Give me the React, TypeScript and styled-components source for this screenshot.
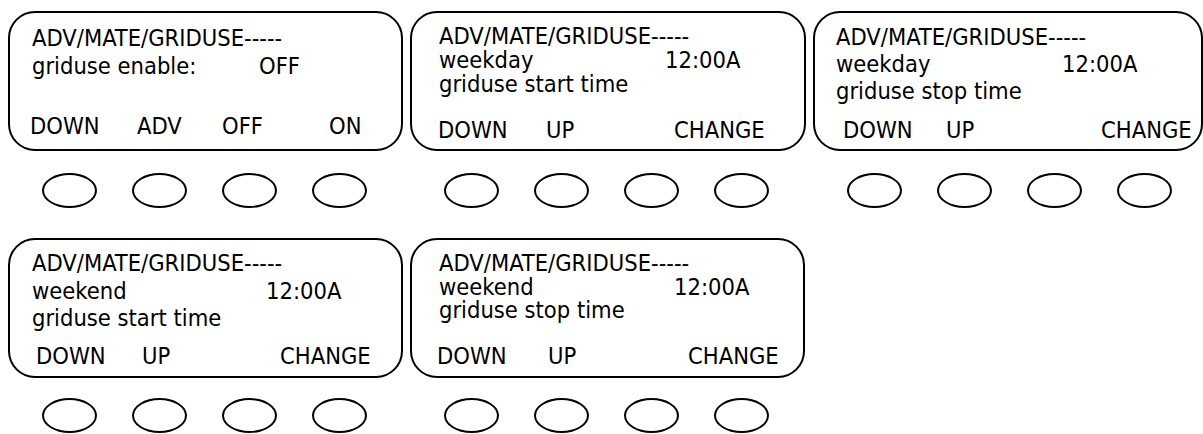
import React from "react";
import styled, { createGlobalStyle } from "styled-components";

const GlobalStyle = createGlobalStyle`
  html, body {
    margin: 0;
    padding: 0;
    background: #ffffff;
    overflow: hidden;
  }
  body {
    font-family: "DejaVu Sans Condensed", "DejaVu Sans", sans-serif;
    color: #000000;
  }
`;

type KeyDef = { label: string; x: number };

type ScreenDef = {
  width: number;
  padTop: number;
  padBottom: number;
  lineHeight: number;
  textX: number;
  valueX: number;
  label: string;
  value: string;
  third?: string;
  keys: KeyDef[];
};

const Board = styled.div`
  display: flex;
  flex-direction: column;
  gap: 30px;
  padding: 11px 0 0 8px;
  width: 1203px;
  height: 434px;
  box-sizing: border-box;
`;

const BoardRow = styled.div<{ $gap: number }>`
  display: flex;
  gap: 7px;
  --unit-gap: ${(p) => p.$gap}px;
`;

const Unit = styled.div`
  display: flex;
  flex-direction: column;
  gap: var(--unit-gap);
`;

const Screen = styled.div<{ $w: number; $pt: number; $pb: number }>`
  width: ${(p) => p.$w}px;
  height: 140px;
  box-sizing: border-box;
  border: 2px solid #000;
  border-radius: 27px;
  display: flex;
  flex-direction: column;
  padding: ${(p) => p.$pt}px 0 ${(p) => p.$pb}px 0;
  font-size: 23.5px;
  white-space: nowrap;
`;

const Line = styled.div<{ $lh: number; $x: number }>`
  line-height: ${(p) => p.$lh}px;
  padding-left: ${(p) => p.$x}px;
`;

const ValueLine = styled.div<{ $lh: number; $x: number; $vx: number }>`
  display: grid;
  grid-template-columns: ${(p) => p.$vx - p.$x}px auto;
  line-height: ${(p) => p.$lh}px;
  padding-left: ${(p) => p.$x}px;
`;

const SoftKeys = styled.div<{ $cols: string }>`
  margin-top: auto;
  display: grid;
  grid-template-columns: ${(p) => p.$cols};
  line-height: 28px;
`;

const Key = styled.span``;

const Buttons = styled.div`
  display: flex;
  gap: 35px;
  padding-left: 34px;
`;

const Oval = styled.div`
  width: 55px;
  height: 35px;
  box-sizing: border-box;
  border: 2px solid #000;
  border-radius: 50%;
`;

const rows: { gap: number; screens: ScreenDef[] }[] = [
  {
    gap: 22,
    screens: [
      {
        width: 395,
        padTop: 11,
        padBottom: 9,
        lineHeight: 28,
        textX: 22,
        valueX: 249,
        label: "griduse enable:",
        value: "OFF",
        keys: [
          { label: "DOWN", x: 20 },
          { label: "ADV", x: 127 },
          { label: "OFF", x: 212 },
          { label: "ON", x: 319 },
        ],
      },
      {
        width: 396,
        padTop: 11,
        padBottom: 5,
        lineHeight: 24,
        textX: 27,
        valueX: 253,
        label: "weekday",
        value: "12:00A",
        third: "griduse start time",
        keys: [
          { label: "DOWN", x: 26 },
          { label: "UP", x: 134 },
          { label: "CHANGE", x: 262 },
        ],
      },
      {
        width: 390,
        padTop: 11,
        padBottom: 5,
        lineHeight: 27,
        textX: 21,
        valueX: 247,
        label: "weekday",
        value: "12:00A",
        third: "griduse stop time",
        keys: [
          { label: "DOWN", x: 28 },
          { label: "UP", x: 131 },
          { label: "CHANGE", x: 286 },
        ],
      },
    ],
  },
  {
    gap: 20,
    screens: [
      {
        width: 395,
        padTop: 10,
        padBottom: 6,
        lineHeight: 27.5,
        textX: 22,
        valueX: 256,
        label: "weekend",
        value: "12:00A",
        third: "griduse start time",
        keys: [
          { label: "DOWN", x: 26 },
          { label: "UP", x: 132 },
          { label: "CHANGE", x: 270 },
        ],
      },
      {
        width: 395,
        padTop: 12,
        padBottom: 6,
        lineHeight: 23.5,
        textX: 27,
        valueX: 262,
        label: "weekend",
        value: "12:00A",
        third: "griduse stop time",
        keys: [
          { label: "DOWN", x: 25 },
          { label: "UP", x: 136 },
          { label: "CHANGE", x: 276 },
        ],
      },
    ],
  },
];

function keyColumns(keys: KeyDef[]): string {
  const cols: string[] = [`${keys[0].x}px`];
  for (let i = 0; i < keys.length - 1; i++) {
    cols.push(`${keys[i + 1].x - keys[i].x}px`);
  }
  cols.push("auto");
  return cols.join(" ");
}

function LcdUnit({ s }: { s: ScreenDef }) {
  return (
    <Unit>
      <Screen $w={s.width} $pt={s.padTop} $pb={s.padBottom}>
        <Line $lh={s.lineHeight} $x={s.textX}>
          ADV/MATE/GRIDUSE-----
        </Line>
        <ValueLine $lh={s.lineHeight} $x={s.textX} $vx={s.valueX}>
          <span>{s.label}</span>
          <span>{s.value}</span>
        </ValueLine>
        {s.third && (
          <Line $lh={s.lineHeight} $x={s.textX}>
            {s.third}
          </Line>
        )}
        <SoftKeys $cols={keyColumns(s.keys)}>
          <span />
          {s.keys.map((k) => (
            <Key key={k.label}>{k.label}</Key>
          ))}
        </SoftKeys>
      </Screen>
      <Buttons>
        <Oval />
        <Oval />
        <Oval />
        <Oval />
      </Buttons>
    </Unit>
  );
}

export default function App() {
  return (
    <>
      <GlobalStyle />
      <Board>
        {rows.map((r, i) => (
          <BoardRow key={i} $gap={r.gap}>
            {r.screens.map((s, j) => (
              <LcdUnit key={j} s={s} />
            ))}
          </BoardRow>
        ))}
      </Board>
    </>
  );
}
